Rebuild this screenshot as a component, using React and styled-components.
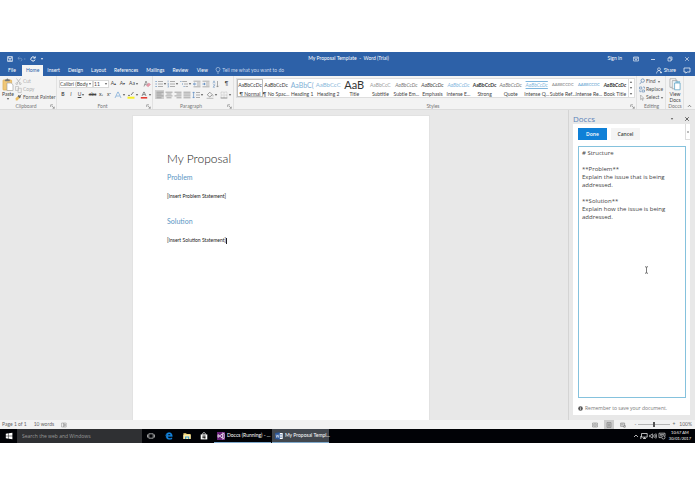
import React, { useState } from "react";
import styled, { createGlobalStyle } from "styled-components";

const tabs = ["File", "Home", "Insert", "Design", "Layout", "References", "Mailings", "Review", "View"];

const styleList = [
  { name: "¶ Normal", text: "AaBbCcDc", color: "#333", active: true },
  { name: "¶ No Spac...", text: "AaBbCcDc", color: "#333" },
  { name: "Heading 1", text: "AaBbC(", color: "#7fb0d6", size: 7 },
  { name: "Heading 2", text: "AaBbCcC", color: "#8ab8da", size: 6 },
  { name: "Title", text: "AaB", color: "#333", size: 11 },
  { name: "Subtitle", text: "AaBbCcC", color: "#999" },
  { name: "Subtle Em...", text: "AaBbCcDc", color: "#777", italic: true },
  { name: "Emphasis", text: "AaBbCcDc", color: "#444", italic: true },
  { name: "Intense E...", text: "AaBbCcDc", color: "#7fb6dd", italic: true },
  { name: "Strong", text: "AaBbCcDc", color: "#333", bold: true },
  { name: "Quote", text: "AaBbCcDc", color: "#777", italic: true },
  { name: "Intense Q...", text: "AaBbCcDc", color: "#7fb6dd", italic: true, ruled: true },
  { name: "Subtle Ref...", text: "AABBCCDC", color: "#777", size: 4 },
  { name: "Intense Re...", text: "AABBCCDC", color: "#4f97cc", size: 4 },
  { name: "Book Title", text: "AaBbCcDc", color: "#333", bold: true, italic: true },
];

const structure = `# Structure

**Problem**
Explain the issue that is being
addressed.

**Solution**
Explain how the issue is being
addressed.`;

/* ---------- icons ---------- */

const Icon = ({ w = 8, h = 8, children }) => (
  <svg width={w} height={h} viewBox={`0 0 ${w} ${h}`} fill="none" stroke="currentColor" strokeWidth="0.8" aria-hidden="true">
    {children}
  </svg>
);

const Caret = () => (
  <Icon w={4} h={4}>
    <path d="M.8 1.3h2.4L2 2.7z" fill="currentColor" stroke="none" />
  </Icon>
);

const Launcher = () => (
  <Icon w={5} h={5}>
    <path d="M.7 3V.8H3M2 2l2.2 2.2M4.3 2.6v1.7H2.6" strokeWidth="0.6" />
  </Icon>
);

const Lines = ({ d }) => (
  <Icon>
    <path d={d} strokeWidth="0.9" stroke="#999" />
  </Icon>
);

const BulletIcon = () => (
  <Icon>
    <path d="M3 1.5h5M3 4h5M3 6.5h5" stroke="#999" />
    <path d="M.5 1.5h1.2M.5 4h1.2M.5 6.5h1.2" stroke="#6b93bf" strokeWidth="1.1" />
  </Icon>
);

const NumberIcon = () => (
  <Icon>
    <path d="M3 1.5h5M3 4h5M3 6.5h5" stroke="#999" />
    <path d="M1.1 .5v1.8M.6 3.5h1v1h-1M.6 5.7h1v1.4h-1" stroke="#6b93bf" strokeWidth="0.6" />
  </Icon>
);

const MultiIcon = () => (
  <Icon>
    <path d="M2.2 1.5H7M4 4h4M5.5 6.5H8" stroke="#999" />
    <path d="M.4 1.5h1M2 4h1M3.6 6.5h1" stroke="#6b93bf" strokeWidth="1.1" />
  </Icon>
);

const IndentIcon = ({ flip }) => (
  <Icon>
    <path d="M.5 1.2h7M4 3h3.5M4 5h3.5M.5 6.8h7" stroke="#999" />
    <path d={flip ? "M.5 4h2.6M2 2.9 3.2 4 2 5.1" : "M3.2 4H.6M1.7 2.9.5 4l1.2 1.1"} stroke="#4a7ebb" />
  </Icon>
);

const PasteIcon = () => (
  <Icon w={12} h={13}>
    <rect x="1" y="2" width="8.6" height="10" rx=".6" fill="#f0c777" stroke="#e0b25c" />
    <path d="M3.2 3V1.8h1.2a1 1 0 0 1 2 0h1.2V3z" fill="#777" stroke="#777" strokeWidth=".4" />
    <path d="M5 5h4.2L11 6.8v5.7H5z" fill="#fff" stroke="#9a9a9a" strokeWidth=".6" />
  </Icon>
);

const ScissorsIcon = () => (
  <Icon w={7} h={7}>
    <path d="M1.5.5 4.8 5M5.5.5 2.2 5" stroke="#aaa" strokeWidth=".7" />
    <circle cx="1.7" cy="5.7" r=".9" stroke="#aaa" strokeWidth=".6" />
    <circle cx="5.3" cy="5.7" r=".9" stroke="#aaa" strokeWidth=".6" />
  </Icon>
);

const CopyIcon = () => (
  <Icon w={7} h={7}>
    <path d="M.5.5h3v4h-3zM3 2.3h3.3v4.2H3z" fill="#f1f1f1" stroke="#b5b5b5" strokeWidth=".6" />
  </Icon>
);

const BrushIcon = () => (
  <Icon w={7} h={7}>
    <path d="M.5 4.2 2.8 2.3 4.6 4 2.4 6.5H.8z" fill="#edbe60" stroke="none" />
    <path d="m3 2.2 1-.9L5.6 3l-1 .9zM5 2 6.5.5" fill="#666" stroke="#555" strokeWidth=".7" />
  </Icon>
);

const ViewDocsIcon = () => (
  <Icon w={12} h={13}>
    <path d="M1 .8h6v8.5H1z" fill="#fff" stroke="#999" strokeWidth=".7" />
    <path d="M3.2 2.6h5v8.2h-5z" fill="#e9f3f8" stroke="#999" strokeWidth=".7" />
    <path d="M5.6 5h5.5v6.8H5.6z" fill="#fff" stroke="#62a6c6" />
    <path d="M6.5 3.3h4.6v1.4H6.5z" fill="#76b5d1" stroke="none" />
  </Icon>
);

const WindowsIcon = () => (
  <Icon>
    <path d="M.8 1.7 3.6 1.3v2.5H.8zM4 1.2 7.4.7v3.1H4zM.8 4.2h2.8v2.5L.8 6.3zM4 4.2h3.4v3.1L4 6.8z" fill="#fff" stroke="none" />
  </Icon>
);

const TaskViewIcon = () => (
  <Icon>
    <path d="M1.8 1.8h4.4v4.4H1.8zM.5 2.5v3M7.5 2.5v3" stroke="#ddd" strokeWidth=".7" />
  </Icon>
);

const EdgeIcon = () => (
  <Icon>
    <path d="M.6 3.8C1 1.6 2.4.6 4.1.6c2.1 0 3.3 1.5 3.3 3.9H2.7c.1 1.3 1 1.8 2.1 1.8.9 0 1.6-.2 2.2-.6v1.4c-.7.3-1.5.5-2.4.5-2.2 0-3.5-1.1-3.5-3 0-1.2.6-2.1 1.6-2.6-.9.2-1.5.8-2.1 1.8zM2.8 3.3h2.8c0-.8-.5-1.4-1.3-1.4s-1.4.5-1.5 1.4z" fill="#1686e0" stroke="#1686e0" strokeWidth=".3" />
  </Icon>
);

const FolderIcon = () => (
  <Icon>
    <path d="M.4 1.2h2.7l.6.7h3.9v5H.4z" fill="#f5d97c" stroke="none" />
    <path d="M.4 3h7.2v3.9H.4z" fill="#fbe9a8" stroke="none" />
    <path d="M2 4.4h4.2v2.5H5V5.6H3.2v1.3H2z" fill="#4ba3cf" stroke="none" />
  </Icon>
);

const StoreIcon = () => (
  <Icon>
    <path d="M.7 2.4h6.6v5H.7z" fill="#fff" stroke="none" />
    <path d="M2.6 2.5V1.6c0-1.2 2.8-1.2 2.8 0v.9" stroke="#fff" strokeWidth=".7" />
    <path d="M2.5 3.6h1.3v1.2H2.5zM4.1 3.5h1.4v1.3H4.1zM2.5 5.1h1.3v1.2H2.5zM4.1 5.1h1.4v1.3H4.1z" fill="#111" stroke="none" />
  </Icon>
);

const VsIcon = () => (
  <Icon>
    <rect width="8" height="8" fill="#68217a" stroke="none" />
    <path d="m1 2.6 4.4 3.7V1.7L1 5.4zM5.4.9l1.7.7v4.8l-1.7.7" stroke="#fff" strokeWidth=".8" />
  </Icon>
);

const WordIcon = () => (
  <Icon>
    <path d="M4 1h3.7v6H4z" fill="#fff" stroke="none" />
    <path d="M4.8 2.5h2.3M4.8 4h2.3M4.8 5.5h2.3" stroke="#2b579a" strokeWidth=".5" />
    <path d="M.2 1 4.8.2v7.6L.2 7z" fill="#2b579a" stroke="none" />
    <path d="m1.1 2.6.6 2.9.8-2.6.8 2.6.6-2.9" stroke="#fff" strokeWidth=".5" />
  </Icon>
);

/* ---------- app ---------- */

const App = () => {
  const [text, setText] = useState(structure);

  return (
    <Screen>
      <GlobalStyle />
      <Header>
        <TitleBar>
          <QuickAccess>
            <BareButton aria-label="Save">
              <Icon w={6} h={6}>
                <path d="M.6.6h4.8v4.8H.6zM1.7.8v1.7h2.6V.8M2 5.2V3.9h2v1.3" strokeWidth=".7" />
              </Icon>
            </BareButton>
            <BareButton aria-label="Undo" $faded>
              <Icon w={9} h={6}>
                <path d="M2.4.8.8 2.3l1.6 1.5M1 2.3h2.6c1.8 0 1.8 2.7 0 2.7M7 3h1.4" strokeWidth=".7" />
              </Icon>
            </BareButton>
            <BareButton aria-label="Redo">
              <Icon w={6} h={6}>
                <path d="M4.6 1.6A2.1 2.1 0 1 0 5 3.6M5.2.4v1.7H3.4" strokeWidth=".9" />
              </Icon>
            </BareButton>
            <BareButton aria-label="Customize"><Caret /></BareButton>
          </QuickAccess>
          <Title>My Proposal Template &nbsp;-&nbsp; Word (Trial)</Title>
          <WindowControls>
            <SignIn href="#signin">Sign in</SignIn>
            <BareButton aria-label="Ribbon options">
              <Icon w={6} h={6}>
                <path d="M.6 1h4.8v4H.6zM.6 2.1h4.8M3 4.6V3M2.2 3.6 3 2.9l.8.7" strokeWidth=".6" />
              </Icon>
            </BareButton>
            <BareButton aria-label="Minimize">
              <Icon w={6} h={6}><path d="M1 3.5h4" strokeWidth=".7" /></Icon>
            </BareButton>
            <BareButton aria-label="Restore">
              <Icon w={6} h={6}><path d="M1 2h3v3H1zM2 2V1h3v3H4" strokeWidth=".6" /></Icon>
            </BareButton>
            <BareButton aria-label="Close">
              <Icon w={6} h={6}><path d="m1.2 1.2 3.6 3.6M4.8 1.2 1.2 4.8" strokeWidth=".6" /></Icon>
            </BareButton>
          </WindowControls>
        </TitleBar>
        <TabBar>
          {tabs.map((tab) => (
            <Tab key={tab} $active={tab === "Home"}>{tab}</Tab>
          ))}
          <TellMe>
            <Icon w={6} h={7}>
              <path d="M2.1 4.8C2.1 3.9 1 3.5 1 2.4a2 2 0 0 1 4 0c0 1.1-1.1 1.5-1.1 2.4zM2.2 6.1h1.6" strokeWidth=".6" />
            </Icon>
            Tell me what you want to do
          </TellMe>
          <Share>
            <Icon w={6} h={7}>
              <path d="M3 3.6a1.4 1.4 0 1 0 0-2.8 1.4 1.4 0 0 0 0 2.8zM.6 6.5c0-3.6 4-3.6 4.4-1M4 5.5h2M5 4.5v2" strokeWidth=".6" />
            </Icon>
            Share
          </Share>
          <BareButton aria-label="Comments">
            <Icon w={8} h={7}><path d="M1 1h6v4H4L2.8 6.2V5H1z" strokeWidth=".7" /></Icon>
          </BareButton>
        </TabBar>
      </Header>

      <Ribbon>
        <Group $width={57}>
          <ClipboardBody>
            <BigButton>
              <PasteIcon />
              Paste
              <Caret />
            </BigButton>
            <Stack>
              <SmallButton $faded><ScissorsIcon />Cut</SmallButton>
              <SmallButton $faded><CopyIcon />Copy</SmallButton>
              <SmallButton><BrushIcon />Format Painter</SmallButton>
            </Stack>
          </ClipboardBody>
          <GroupLabel>Clipboard<Launcher /></GroupLabel>
        </Group>

        <Group $width={96}>
          <ToolRow>
            <FontBox $width={34}>
              <select aria-label="Font"><option>Calibri (Body)</option></select>
              <Caret />
            </FontBox>
            <FontBox $width={16}>
              <select aria-label="Font size"><option>11</option></select>
              <Caret />
            </FontBox>
            <Tool aria-label="Grow font" $width={9}>A<sup>▴</sup></Tool>
            <Tool aria-label="Shrink font" $width={9}>A<sup>▾</sup></Tool>
            <Tool aria-label="Change case" $width={14}>Aa<Caret /></Tool>
            <Tool aria-label="Clear formatting" $width={11}>
              <Icon>
                <path d="M1 6.5 3 1l1.6 4M1.7 4.6h2" stroke="#777" strokeWidth=".7" />
                <path d="M3.4 5.6 5.8 3l1.7 1.4-2.3 2.4z" fill="#e79aaa" stroke="#d8788c" strokeWidth=".4" />
              </Icon>
            </Tool>
          </ToolRow>
          <ToolRow>
            <Tool $width={8}><b>B</b></Tool>
            <Tool $width={8}><i>I</i></Tool>
            <Tool $width={13}><u>U</u><Caret /></Tool>
            <Tool $width={9}><s>abc</s></Tool>
            <Tool $width={8}>x<sub>₂</sub></Tool>
            <Tool $width={8}>x<sup>²</sup></Tool>
            <Tool aria-label="Text effects" $width={13}>
              <Icon><path d="M1 7 3.8 1h.4L7 7M2.2 5h3.6" stroke="#82add9" /></Icon>
              <Caret />
            </Tool>
            <Tool aria-label="Highlight" $width={13}>
              <Icon>
                <path d="M1 4.4h2M4 4 6.5 1" stroke="#777" strokeWidth="1" />
                <path d="M.5 6.7h7" stroke="#f7ee22" strokeWidth="2" />
              </Icon>
              <Caret />
            </Tool>
            <Tool aria-label="Font color" $width={13}>
              <Icon>
                <path d="m2 5 1.8-4h.4L6 5M2.8 3.6h2.4" stroke="#666" strokeWidth=".7" />
                <path d="M.8 6.8h6.4" stroke="#e33b31" strokeWidth="1.6" />
              </Icon>
              <Caret />
            </Tool>
          </ToolRow>
          <GroupLabel>Font<Launcher /></GroupLabel>
        </Group>

        <Group $width={81}>
          <ToolRow>
            <Tool aria-label="Bullets" $width={12}><BulletIcon /><Caret /></Tool>
            <Tool aria-label="Numbering" $width={12}><NumberIcon /><Caret /></Tool>
            <Tool aria-label="Multilevel list" $width={13}><MultiIcon /><Caret /></Tool>
            <Tool aria-label="Decrease indent" $width={9}><IndentIcon /></Tool>
            <Tool aria-label="Increase indent" $width={9}><IndentIcon flip /></Tool>
            <Tool aria-label="Sort" $width={11}>
              <Icon>
                <path d="m1 3.4 1-2.6 1 2.6M1 4.8h2L1 7.2h2" stroke="#6b93bf" strokeWidth=".6" />
                <path d="M5.5 1v6M4.4 5.8l1.1 1.3 1.1-1.3" stroke="#777" strokeWidth=".6" />
              </Icon>
            </Tool>
            <Tool aria-label="Show marks" $width={11}>¶</Tool>
          </ToolRow>
          <ToolRow>
            <Tool aria-label="Align left" $width={9} $active><Lines d="M.5 1.2h7M.5 3h5M.5 4.9h7M.5 6.8h5" /></Tool>
            <Tool aria-label="Center" $width={9}><Lines d="M.5 1.2h7M1.5 3h5M.5 4.9h7M1.5 6.8h5" /></Tool>
            <Tool aria-label="Align right" $width={9}><Lines d="M.5 1.2h7M2.5 3h5M.5 4.9h7M2.5 6.8h5" /></Tool>
            <Tool aria-label="Justify" $width={9}><Lines d="M.5 1.2h7M.5 3h7M.5 4.9h7M.5 6.8h7" /></Tool>
            <Tool aria-label="Line spacing" $width={14}>
              <Icon>
                <path d="M4 1.5h4M4 4h4M4 6.5h4" stroke="#999" />
                <path d="M1.6 1v6M.5 2.1 1.6.9l1.1 1.2M.5 5.9l1.1 1.2 1.1-1.2" stroke="#4a7ebb" strokeWidth=".6" />
              </Icon>
              <Caret />
            </Tool>
            <Tool aria-label="Shading" $width={14}>
              <Icon>
                <path d="m1.2 3.8 2.6-2.6 2.6 2.6-2.6 2.1zM7 4.3v1" stroke="#777" strokeWidth=".7" />
                <path d="M.6 7.3h6.8" stroke="#aaa" />
              </Icon>
              <Caret />
            </Tool>
            <Tool aria-label="Borders" $width={13}>
              <Icon>
                <path d="M1 1h6v6M1 1v6M4 1v6M1 4h6" stroke="#aaa" strokeWidth=".5" strokeDasharray=".8 .5" />
                <path d="M.7 7h6.6" stroke="#777" />
              </Icon>
              <Caret />
            </Tool>
          </ToolRow>
          <GroupLabel>Paragraph<Launcher /></GroupLabel>
        </Group>

        <StylesGroup>
          <Gallery>
            {styleList.map((s) => (
              <StyleItem key={s.name} $active={s.active}>
                <Preview $color={s.color} $size={s.size} $bold={s.bold} $italic={s.italic} $ruled={s.ruled}>
                  {s.text}
                </Preview>
                <span>{s.name}</span>
              </StyleItem>
            ))}
            <GalleryScroll>
              <button aria-label="Scroll up"><Icon w={4} h={4}><path d="M.8 2.7h2.4L2 1.3z" fill="currentColor" stroke="none" /></Icon></button>
              <button aria-label="Scroll down"><Caret /></button>
              <button aria-label="More styles"><Caret /></button>
            </GalleryScroll>
          </Gallery>
          <GroupLabel>Styles<Launcher /></GroupLabel>
        </StylesGroup>

        <Group $width={29}>
          <Stack>
            <SmallButton>
              <Icon w={6} h={7}><path d="M3.7 4.3a1.7 1.7 0 1 0 0-3.4 1.7 1.7 0 0 0 0 3.4zM2.5 4 .6 6.2" stroke="#6b8fb8" strokeWidth=".8" /></Icon>
              Find<Caret />
            </SmallButton>
            <SmallButton>
              <Icon w={6} h={7}><path d="M.5 1h2.3v2H.5zM3.2 4h2.3v2H3.2zM4 1h1.5v1.6M2.4 5.7H.8V4" stroke="#6b8fb8" strokeWidth=".7" /></Icon>
              Replace
            </SmallButton>
            <SmallButton>
              <Icon w={6} h={7}><path d="M1.6 1v4.6l1.1-1 .8 1.8.6-.3-.7-1.7h1.5z" stroke="#888" strokeWidth=".5" /></Icon>
              Select<Caret />
            </SmallButton>
          </Stack>
          <GroupLabel>Editing</GroupLabel>
        </Group>

        <Group $width={18}>
          <BigButton>
            <ViewDocsIcon />
            <span>View<br />Docs</span>
          </BigButton>
          <GroupLabel>Doccs</GroupLabel>
        </Group>

        <Collapse aria-label="Collapse ribbon">
          <Icon w={5} h={4}><path d="m1 2.8 1.5-1.5L4 2.8" strokeWidth=".7" /></Icon>
        </Collapse>
      </Ribbon>

      <Workspace>
        <Canvas>
          <Page>
            <DocTitle>My Proposal</DocTitle>
            <DocHeading>Problem</DocHeading>
            <DocText>[Insert Problem Statement]</DocText>
            <DocHeading>Solution</DocHeading>
            <DocText>[Insert Solution Statement]<TextCaret /></DocText>
          </Page>
        </Canvas>
        <Pane>
          <PaneHeader>
            <h2>Doccs</h2>
            <BareButton aria-label="Pane options"><Caret /></BareButton>
            <BareButton aria-label="Close pane">
              <Icon w={6} h={6}><path d="m1.2 1.2 3.6 3.6M4.8 1.2 1.2 4.8" /></Icon>
            </BareButton>
          </PaneHeader>
          <PaneBody>
            <PaneActions>
              <ActionButton $primary>Done</ActionButton>
              <ActionButton>Cancel</ActionButton>
            </PaneActions>
            <Editor
              aria-label="Document structure"
              spellCheck={false}
              value={text}
              onChange={(e) => setText(e.target.value)}
            />
            <Note>
              <Icon w={5} h={5}>
                <circle cx="2.5" cy="2.5" r="2.3" fill="#555" stroke="none" />
                <path d="M2.5 2.2v1.6M2.5 1v.6" stroke="#fff" strokeWidth=".7" />
              </Icon>
              Remember to save your document.
            </Note>
            <PaneHandle aria-label="Pane menu">
              <Icon w={4} h={6}><path d="M2.5 2 1.5 3l1 1" strokeWidth=".7" /></Icon>
            </PaneHandle>
            <Pointer>
              <Icon w={5} h={8}><path d="M1 .8h1.1l.4.4.4-.4H4M2.5 1.2v5.6M1 7.2h1.1l.4-.4.4.4H4" stroke="#222" strokeWidth=".6" /></Icon>
            </Pointer>
          </PaneBody>
        </Pane>
      </Workspace>

      <StatusBar>
        <span>Page 1 of 1</span>
        <span>10 words</span>
        <Icon w={6} h={6}><path d="M.6 1h2.2v4H.6zM2.8 1h2.4v4H2.8zM3.4 2l1.2 2M4.6 2 3.4 4" stroke="#888" strokeWidth=".5" /></Icon>
        <ViewButtons>
          <ViewButton aria-label="Read mode"><Icon w={6} h={6}><path d="M.6 1h4.8v4H.6zM3 1v4M1.2 2.4h1.2M3.6 2.4h1.2M1.2 3.6h1.2M3.6 3.6h1.2" strokeWidth=".5" /></Icon></ViewButton>
          <ViewButton aria-label="Print layout" $active><Icon w={6} h={6}><path d="M1 .6h4v4.8H1zM1.8 2h2.4M1.8 3h2.4M1.8 4h2.4" strokeWidth=".5" /></Icon></ViewButton>
          <ViewButton aria-label="Web layout"><Icon w={6} h={6}><path d="M.6 1h4v3.4h-4zM1.2 2h2.6M1.2 3h2" strokeWidth=".5" /><circle cx="4.5" cy="4.4" r="1.1" strokeWidth=".5" /></Icon></ViewButton>
        </ViewButtons>
        <ZoomControl>
          <BareButton aria-label="Zoom out">-</BareButton>
          <ZoomSlider type="range" aria-label="Zoom" min="10" max="190" defaultValue="100" />
          <BareButton aria-label="Zoom in">+</BareButton>
          <span>100%</span>
        </ZoomControl>
      </StatusBar>

      <Taskbar>
        <TaskButton aria-label="Start" $width={17}><WindowsIcon /></TaskButton>
        <Search type="search" aria-label="Search" placeholder="Search the web and Windows" />
        <TaskButton aria-label="Task view" $width={18}><TaskViewIcon /></TaskButton>
        <TaskButton aria-label="Edge" $width={18}><EdgeIcon /></TaskButton>
        <TaskButton aria-label="File Explorer" $width={17}><FolderIcon /></TaskButton>
        <TaskButton aria-label="Store" $width={18}><StoreIcon /></TaskButton>
        <RunningApp><VsIcon />Doccs (Running) - ...</RunningApp>
        <RunningApp $active><WordIcon />My Proposal Templ...</RunningApp>
        <Tray>
          <Icon w={6} h={8}><path d="m1 5 2-2 2 2" strokeWidth=".7" /></Icon>
          <Icon><path d="M1.5 1.5h5.7v3.6H1.5zM3 6.5h3M4.4 5v1.5M.8 4v3" strokeWidth=".7" /></Icon>
          <Icon><path d="M.6 3.2h1.2L3.4 1.8v4.4L1.8 4.8H.6zM4.5 2.8q1 1.2 0 2.4M5.6 2q1.8 2 0 4M6.8 1.4q2 2.6 0 5.2" strokeWidth=".6" /></Icon>
          <Icon><path d="M1 1.2h6v3M1 1.2v4.4h2.4M2 2.6h4M2 3.8h2" strokeWidth=".6" /><circle cx="5.4" cy="5.4" r="1.6" strokeWidth=".6" /></Icon>
          <Clock>
            <span>10:57 AM</span>
            <span>30/01/2017</span>
          </Clock>
        </Tray>
      </Taskbar>
    </Screen>
  );
};

export default App;


const GlobalStyle = createGlobalStyle`
  * {
    box-sizing: border-box;
  }

  body {
    margin: 0;
    background: #fff;
    font-family: Lato, "Open Sans", sans-serif;
    font-size: 5px;
    line-height: 7px;
    color: #444;
  }

  svg {
    display: block;
    flex: none;
  }

  button,
  input,
  select,
  textarea {
    font: inherit;
    color: inherit;
    margin: 0;
    padding: 0;
    border: none;
    background: none;
  }
`;

const Screen = styled.div`
  display: flex;
  flex-direction: column;
  min-height: 100vh;
  padding: 52px 0 51px;
`;

const Header = styled.header`
  background: #2d61a8;
  color: #fff;
`;

const TitleBar = styled.div`
  display: grid;
  grid-template-columns: 1fr auto 1fr;
  align-items: center;
  height: 13px;
  padding: 0 5px 0 7px;
`;

const QuickAccess = styled.div`
  display: flex;
  align-items: center;
  gap: 4px;
`;

const BareButton = styled.button`
  display: flex;
  align-items: center;
  opacity: ${({ $faded }) => ($faded ? 0.4 : 1)};
`;

const Title = styled.div`
  white-space: nowrap;
`;

const WindowControls = styled.div`
  display: flex;
  justify-content: flex-end;
  align-items: center;
  gap: 11px;
`;

const SignIn = styled.a`
  color: inherit;
  text-decoration: none;
`;

const TabBar = styled.nav`
  display: flex;
  align-items: center;
  height: 11px;
  padding: 0 4px 0 2px;
`;

const Tab = styled.button`
  min-width: 20px;
  height: 11px;
  padding: 0 4px;
  background: ${({ $active }) => ($active ? "#f4f4f4" : "transparent")};
  color: ${({ $active }) => ($active ? "#2d61a8" : "#fff")};
`;

const TellMe = styled.button`
  display: flex;
  align-items: center;
  gap: 1px;
  margin-left: 3px;
  color: #c5d5ea;
`;

const Share = styled.button`
  display: flex;
  align-items: center;
  gap: 2px;
  margin: 0 7px 0 auto;
`;

const Ribbon = styled.section`
  display: flex;
  height: 34px;
  background: #f3f3f3;
  border-bottom: 1px solid #dcdcdc;
`;

const Group = styled.div`
  display: flex;
  flex-direction: column;
  flex: none;
  width: ${({ $width }) => $width}px;
  padding: 2px 1px 0 2px;
  border-right: 1px solid #e2e2e2;
`;

const StylesGroup = styled(Group)`
  flex: 1;
  width: auto;
  min-width: 0;
`;

const GroupLabel = styled.div`
  display: flex;
  align-items: center;
  justify-content: center;
  margin-top: auto;
  height: 6px;
  color: #777;
  white-space: nowrap;

  &::before {
    content: "";
    flex: 1;
  }

  &::after {
    content: "";
    flex: 1;
    order: 1;
  }

  svg {
    order: 2;
  }
`;

const ClipboardBody = styled.div`
  display: flex;
  gap: 1px;
`;

const Stack = styled.div`
  display: flex;
  flex-direction: column;
  gap: 1px;
`;

const BigButton = styled.button`
  display: flex;
  flex-direction: column;
  align-items: center;
  width: 14px;
  line-height: 6px;
`;

const SmallButton = styled.button`
  display: flex;
  align-items: center;
  gap: 1px;
  height: 7px;
  white-space: nowrap;
  color: ${({ $faded }) => ($faded ? "#b0b0b0" : "#555")};
`;

const ToolRow = styled.div`
  display: flex;
  align-items: center;
  height: 11px;
`;

const Tool = styled.button`
  display: flex;
  align-items: center;
  justify-content: center;
  flex: none;
  width: ${({ $width }) => $width}px;
  height: 9px;
  background: ${({ $active }) => ($active ? "#cfcfcf" : "transparent")};

  sup,
  sub {
    font-size: 4px;
    line-height: 4px;
  }
`;

const FontBox = styled.label`
  display: flex;
  align-items: center;
  flex: none;
  width: ${({ $width }) => $width}px;
  height: 8px;
  background: #fff;
  border: 1px solid #d8d8d8;

  select {
    flex: 1;
    min-width: 0;
    height: 6px;
    line-height: 6px;
    appearance: none;
    outline: none;
  }
`;

const Gallery = styled.div`
  display: flex;
  height: 20px;
  background: #fff;
  border: 1px solid #dedede;
`;

const StyleItem = styled.button`
  display: flex;
  flex-direction: column;
  align-items: center;
  flex: 1;
  min-width: 0;
  line-height: 6px;
  white-space: nowrap;
  outline: ${({ $active }) => ($active ? "1px solid #bdbdbd" : "none")};
  outline-offset: -1px;
`;

const Preview = styled.span`
  display: flex;
  align-items: center;
  justify-content: center;
  height: 12px;
  line-height: 12px;
  color: ${({ $color }) => $color};
  font-size: ${({ $size }) => $size || 5}px;
  font-weight: ${({ $bold }) => ($bold ? 700 : 400)};
  font-style: ${({ $italic }) => ($italic ? "italic" : "normal")};
  text-decoration: ${({ $ruled }) => ($ruled ? "underline overline" : "none")};
`;

const GalleryScroll = styled.div`
  display: flex;
  flex-direction: column;
  width: 6px;
  border-left: 1px solid #dedede;

  button {
    display: flex;
    align-items: center;
    justify-content: center;
    flex: 1;
  }
`;

const Collapse = styled.button`
  display: flex;
  align-items: flex-end;
  padding: 0 3px 1px 3px;
`;

const Workspace = styled.main`
  display: flex;
  flex: 1;
  background: #e8e8e8;
`;

const Canvas = styled.div`
  display: flex;
  justify-content: center;
  flex: 1;
  padding: 5px 6px 0 0;
`;

const Page = styled.article`
  width: 53%;
  padding: 34px 34px 0;
  background: #fff;
  border: 1px solid #e2e2e2;
  border-bottom: none;
  color: #222;
`;

const DocTitle = styled.h1`
  margin: 0 0 3px;
  font-size: 12px;
  line-height: 18px;
  font-weight: 300;
`;

const DocHeading = styled.h2`
  margin: 0;
  font-size: 7px;
  line-height: 12px;
  font-weight: 400;
  color: #5b96c4;
`;

const DocText = styled.p`
  margin: 9px 0 14px;
  line-height: 9px;
`;

const TextCaret = styled.span`
  display: inline-block;
  width: 1px;
  height: 6px;
  background: #222;
  vertical-align: middle;
`;

const Pane = styled.aside`
  display: flex;
  flex-direction: column;
  width: 127px;
  padding: 3px 5px 5px 4px;
  border-left: 1px solid #d4d4d4;
  font-family: "Open Sans", "Noto Sans", sans-serif;
`;

const PaneHeader = styled.div`
  display: flex;
  align-items: center;
  gap: 10px;
  height: 11px;

  h2 {
    flex: 1;
    margin: 0;
    font-size: 8px;
    line-height: 11px;
    font-weight: 400;
    color: #5b83ba;
  }
`;

const PaneBody = styled.div`
  position: relative;
  display: flex;
  flex-direction: column;
  flex: 1;
  padding: 4px 4px 3px 5px;
  background: #fff;
`;

const PaneActions = styled.div`
  display: flex;
  gap: 4px;
  margin-bottom: 6px;
`;

const ActionButton = styled.button`
  width: 29px;
  height: 12px;
  background: ${({ $primary }) => ($primary ? "#0f80d7" : "#f4f4f4")};
  color: ${({ $primary }) => ($primary ? "#fff" : "#444")};
  font-weight: 600;
`;

const Editor = styled.textarea`
  flex: 1;
  width: 100%;
  padding: 2px 3px;
  border: 1px solid #85c2dd;
  resize: none;
  outline: none;
  overflow: hidden;
  font-size: 6px;
  line-height: 8px;
`;

const Note = styled.p`
  display: flex;
  align-items: center;
  gap: 2px;
  margin: 6px 0 0;
  color: #777;
  line-height: 8px;
`;

const PaneHandle = styled.button`
  position: absolute;
  top: 0;
  right: 0;
  display: flex;
  align-items: center;
  height: 16px;
  background: #fff;
  border-left: 1px solid #ddd;
  border-bottom: 1px solid #ddd;
`;

const Pointer = styled.span`
  position: absolute;
  top: 142px;
  left: 71px;
`;

const StatusBar = styled.footer`
  display: flex;
  align-items: center;
  gap: 7px;
  height: 9px;
  padding: 0 3px 0 2px;
  background: #f2f2f2;
  color: #666;
`;

const ViewButtons = styled.div`
  display: flex;
  gap: 4px;
  margin-left: auto;
`;

const ViewButton = styled.button`
  display: flex;
  align-items: center;
  justify-content: center;
  width: 10px;
  height: 9px;
  background: ${({ $active }) => ($active ? "#cccccc" : "transparent")};
`;

const ZoomControl = styled.div`
  display: flex;
  align-items: center;
  gap: 2px;

  span {
    margin-left: 2px;
  }
`;

const ZoomSlider = styled.input`
  appearance: none;
  width: 32px;
  height: 7px;
  background: linear-gradient(#b5b5b5, #b5b5b5) center / 100% 1px no-repeat;

  &::-webkit-slider-thumb {
    appearance: none;
    width: 2px;
    height: 5px;
    background: #555;
  }
`;

const Taskbar = styled.footer`
  display: flex;
  align-items: stretch;
  height: 14px;
  background: #010206;
  color: #fff;
`;

const TaskButton = styled.button`
  display: flex;
  align-items: center;
  justify-content: center;
  width: ${({ $width }) => $width}px;
`;

const Search = styled.input`
  width: 125px;
  padding: 0 5px;
  background: #2f3033;
  color: #aaa;
  appearance: none;
  font-family: "Open Sans", "Noto Sans", sans-serif;

  &::placeholder {
    color: #9a9a9a;
  }
`;

const RunningApp = styled.button`
  display: flex;
  align-items: center;
  gap: 2px;
  width: 57px;
  margin-left: 1px;
  padding: 0 3px;
  white-space: nowrap;
  background: ${({ $active }) => ($active ? "#42474e" : "transparent")};
  border-bottom: 1px solid #7fa9cc;
`;

const Tray = styled.div`
  display: flex;
  align-items: center;
  gap: 1px;
  margin-left: auto;
  padding-right: 4px;
`;

const Clock = styled.div`
  display: flex;
  flex-direction: column;
  align-items: center;
  margin-left: 2px;
  font-size: 4px;
  line-height: 6px;
`;
